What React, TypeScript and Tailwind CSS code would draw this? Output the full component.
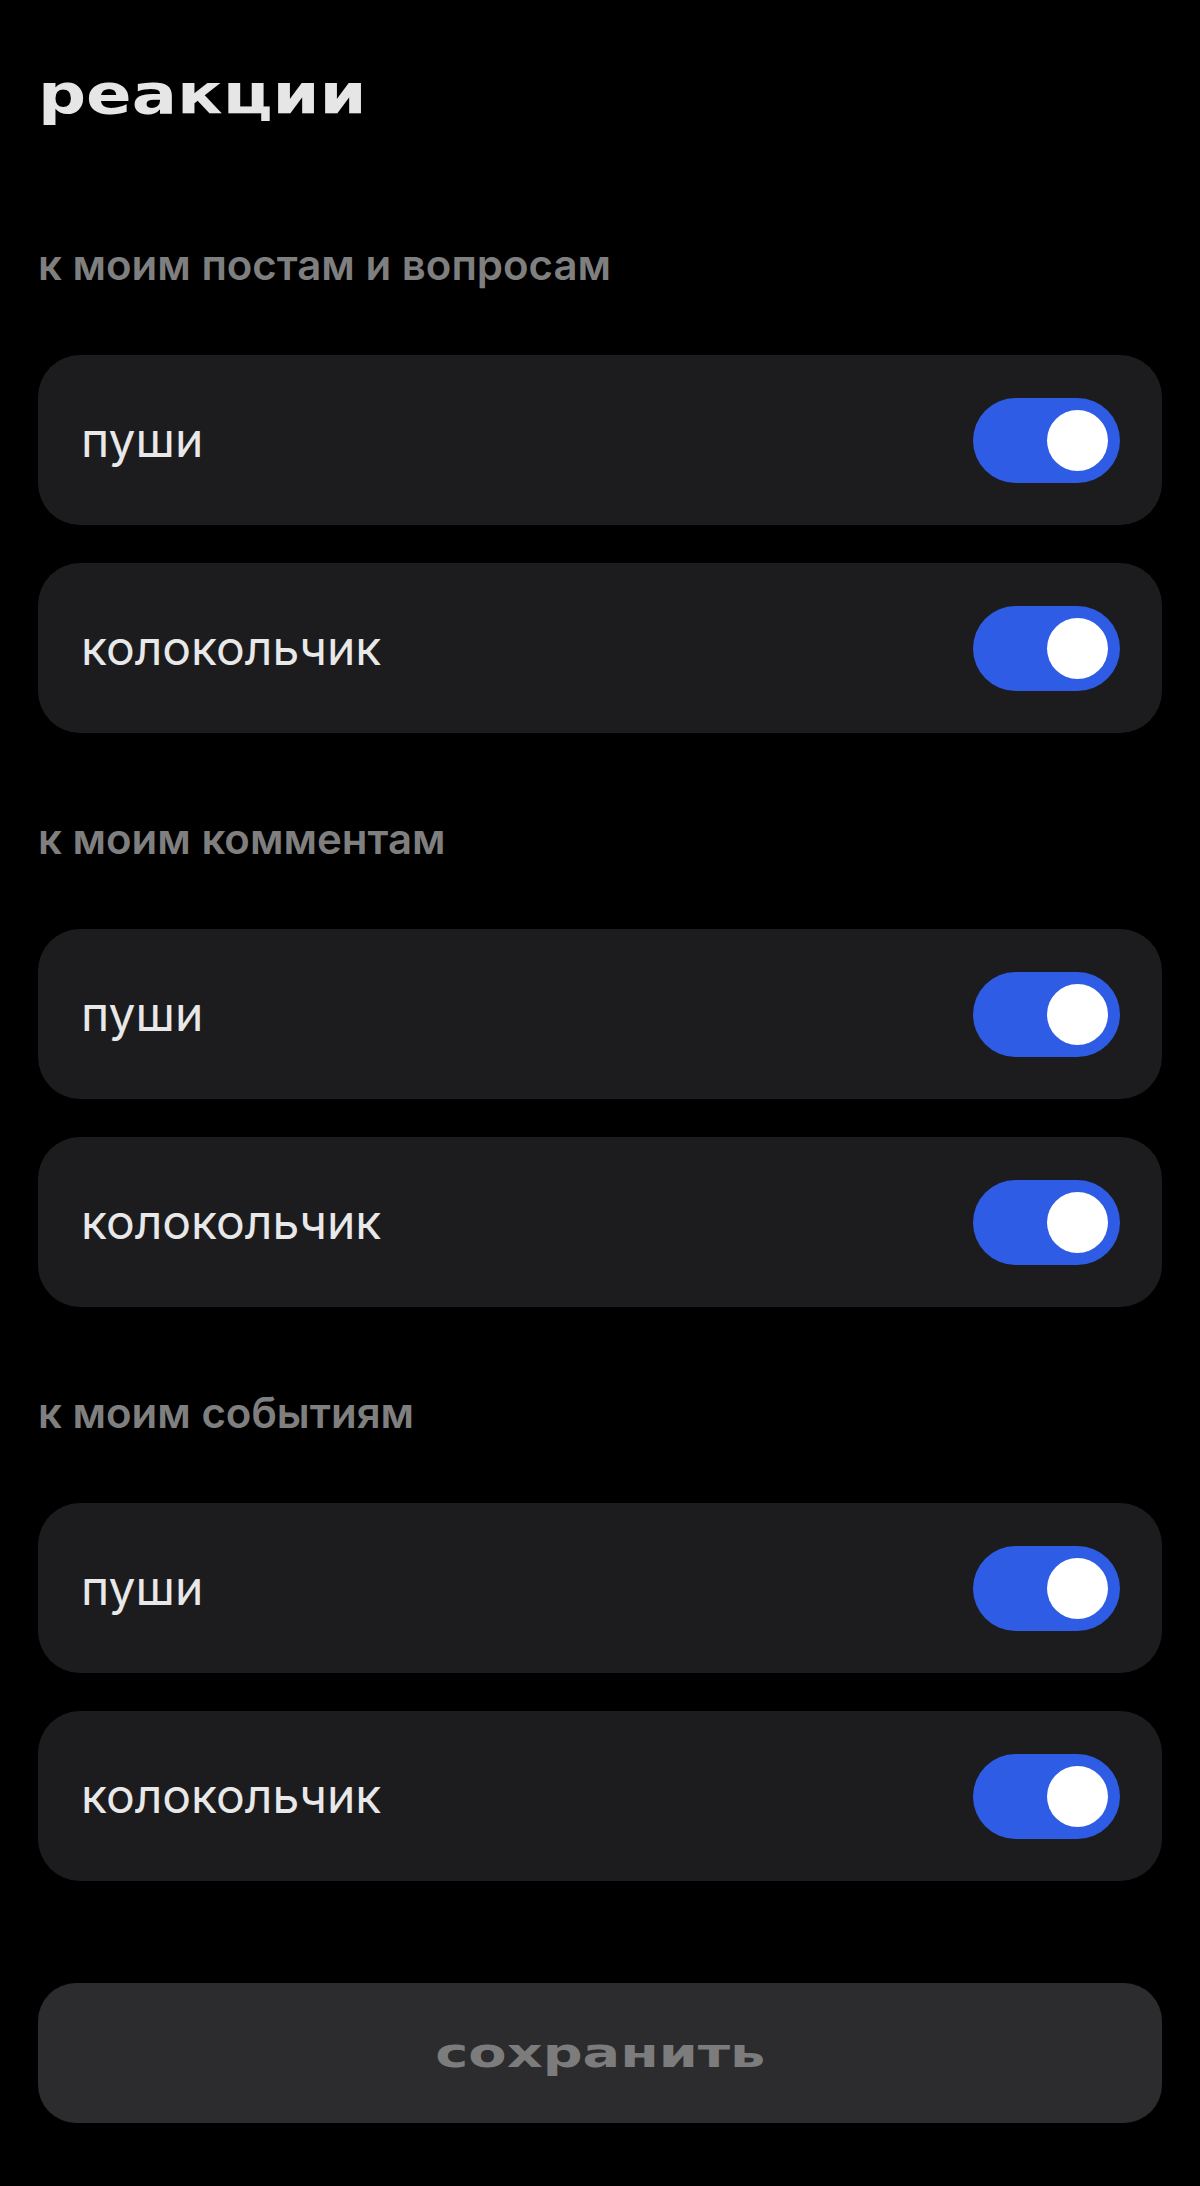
import React from "react";

function Toggle() {
  return (
    <div className="flex h-[85px] w-[147px] shrink-0 items-center justify-end rounded-full bg-[#2f5ce4] pr-[12px]">
      <div className="h-[61px] w-[61px] rounded-full bg-white" />
    </div>
  );
}

function Row({ label }: { label: string }) {
  return (
    <div className="flex h-[170px] items-center justify-between rounded-[42px] bg-[#1c1c1e] pl-[43px] pr-[42px]">
      <span className="font-['Inter',sans-serif] text-[48px] leading-none text-[#e8e8e8]">
        {label}
      </span>
      <Toggle />
    </div>
  );
}

function Section({ title, first }: { title: string; first?: boolean }) {
  return (
    <section className={first ? "mt-[122px]" : "mt-[85px]"}>
      <h2 className="h-[40px] font-['Inter',sans-serif] text-[42px] font-semibold leading-none text-[#7f7f7f]">
        {title}
      </h2>
      <div className="mt-[71px] flex flex-col gap-[38px]">
        <Row label="пуши" />
        <Row label="колокольчик" />
      </div>
    </section>
  );
}

export default function App() {
  return (
    <div className="min-h-[2186px] w-full bg-black px-[38px] pb-[64px] pt-[66px]">
      <h1 className="h-[56px] font-['DejaVu_Sans',sans-serif] text-[56px] font-bold leading-none text-[#e6e6e6]">
        <span className="inline-block origin-left scale-x-[1.2]">реакции</span>
      </h1>
      <Section title="к моим постам и вопросам" first />
      <Section title="к моим комментам" />
      <Section title="к моим событиям" />
      <button className="mt-[102px] flex h-[140px] w-full items-center justify-center rounded-[38px] bg-[#2c2c2e]">
        <span className="inline-block scale-x-[1.36] font-['DejaVu_Sans',sans-serif] text-[41px] font-bold leading-none text-[#7c7c7c]">
          сохранить
        </span>
      </button>
    </div>
  );
}
